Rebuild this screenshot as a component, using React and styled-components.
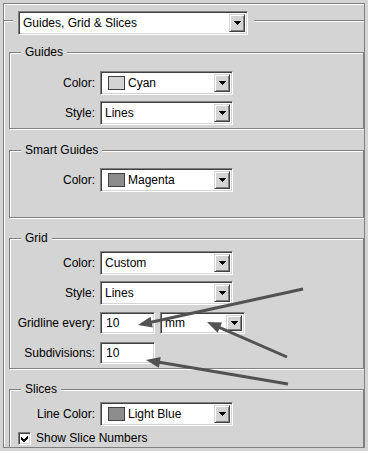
import React from 'react';
import styled, { createGlobalStyle } from 'styled-components';

const bg = '#d4d4d4';
const shade = '#808080';
const dark = '#404040';
const arrowInk = '#525252';

const GlobalStyle = createGlobalStyle`
  html, body {
    margin: 0;
    padding: 0;
    background: ${bg};
  }
  body {
    font-family: "Liberation Sans", Arial, sans-serif;
    font-size: 12px;
    color: #000;
  }
`;

const Page = styled.div`
  position: relative;
  width: 368px;
  height: 451px;
  box-sizing: border-box;
  padding: 3px 0 0 3px;
  overflow: hidden;
`;

const Panel = styled.div`
  width: 362px;
  height: 445px;
  box-sizing: border-box;
  border: 1px solid ${shade};
  box-shadow: inset 1px 1px 0 #fff;
  overflow: hidden;
  display: flex;
  flex-direction: column;
`;

const HeaderRow = styled.div`
  display: flex;
  align-items: flex-start;
  margin-top: 7px;
`;

const Rule = styled.div`
  height: 0;
  margin-top: 9px;
  border-top: 1px solid ${shade};
  border-bottom: 1px solid #fff;
  ${p => (p.$w ? `width: ${p.$w}px;` : 'flex: 1;')}
`;

const Groups = styled.div`
  display: flex;
  flex-direction: column;
  padding-left: 5px;
`;

const Group = styled.fieldset`
  margin: ${p => p.$mt}px 0 0 0;
  padding: 0 0 ${p => p.$pb}px 0;
  min-inline-size: 0;
  border: 1px solid ${shade};
  box-shadow: inset 1px 1px 0 #fff, 1px 1px 0 #fff;
  flex-shrink: 0;
`;

const Legend = styled.legend`
  margin-left: 11px;
  padding: 0 4px;
  line-height: 14px;
  background: ${bg};
`;

const Rows = styled.div`
  display: flex;
  flex-direction: column;
  gap: 6px;
  padding-top: ${p => p.$pt}px;
`;

const Row = styled.div`
  display: flex;
  align-items: center;
  gap: 5px;
  height: 24px;
`;

const Label = styled.span`
  width: 85px;
  text-align: right;
  white-space: nowrap;
`;

const SelectBox = styled.div`
  width: ${p => p.$w}px;
  height: ${p => p.$h || 24}px;
  box-sizing: border-box;
  display: flex;
  align-items: center;
  background: #fff;
  border: 1px solid;
  border-color: ${shade} #fff #fff ${shade};
  box-shadow: inset 1px 1px 0 ${dark}, inset -1px -1px 0 ${bg};
  padding: 2px 2px 2px 4px;
  flex-shrink: 0;
`;

const SelectText = styled.span`
  flex: 1;
  white-space: nowrap;
  overflow: hidden;
`;

const DropButton = styled.div`
  width: 16px;
  align-self: stretch;
  box-sizing: border-box;
  background: ${bg};
  border: 1px solid;
  border-color: ${bg} ${dark} ${dark} ${bg};
  box-shadow: inset 1px 1px 0 #fff, inset -1px -1px 0 ${shade};
  display: flex;
  align-items: center;
  justify-content: center;
`;

const Swatch = styled.span`
  width: 17px;
  height: 14px;
  box-sizing: border-box;
  margin: 0 3px 0 3px;
  border: 1px solid ${dark};
  background: ${p => p.$fill};
`;

const TextBox = styled(SelectBox)`
  width: 55px;
  height: 22px;
  padding-left: 5px;
`;

const CheckRow = styled.label`
  display: flex;
  align-items: center;
  gap: 5px;
  margin: 5px 0 0 8px;
`;

const CheckBox = styled.span`
  width: 13px;
  height: 13px;
  box-sizing: border-box;
  background: #fff;
  border: 1px solid;
  border-color: ${shade} #fff #fff ${shade};
  box-shadow: inset 1px 1px 0 ${dark}, inset -1px -1px 0 ${bg};
  display: flex;
  align-items: center;
  justify-content: center;
`;

const Overlay = styled.svg`
  position: absolute;
  left: 0;
  top: 0;
  pointer-events: none;
`;

function Select({ w, value, swatch, h }) {
  return (
    <SelectBox $w={w} $h={h}>
      {swatch && <Swatch $fill={swatch} />}
      <SelectText>{value}</SelectText>
      <DropButton>
        <svg width="7" height="4" viewBox="0 0 7 4" shapeRendering="crispEdges">
          <polygon points="0,0 7,0 3.5,4" fill="#000" />
        </svg>
      </DropButton>
    </SelectBox>
  );
}

function Field({ label, children }) {
  return (
    <Row>
      <Label>{label}</Label>
      {children}
    </Row>
  );
}

const arrows = [
  { from: [303, 289], to: [138, 325] },
  { from: [287, 357], to: [207, 322] },
  { from: [288, 384], to: [146, 360] },
];

function Arrow({ from, to }) {
  const dx = to[0] - from[0];
  const dy = to[1] - from[1];
  const len = Math.hypot(dx, dy);
  const ux = dx / len;
  const uy = dy / len;
  const headLen = 14;
  const headHalf = 5.5;
  const bx = to[0] - ux * headLen;
  const by = to[1] - uy * headLen;
  const nx = -uy;
  const ny = ux;
  const pts = [
    `${to[0]},${to[1]}`,
    `${bx + nx * headHalf},${by + ny * headHalf}`,
    `${bx - nx * headHalf},${by - ny * headHalf}`,
  ].join(' ');
  return (
    <g>
      <line x1={from[0]} y1={from[1]} x2={bx + ux * 2} y2={by + uy * 2} stroke={arrowInk} strokeWidth="3" />
      <polygon points={pts} fill={arrowInk} />
    </g>
  );
}

export default function App() {
  return (
    <Page>
      <GlobalStyle />
      <Panel>
        <HeaderRow>
          <Rule $w={9} />
          <div style={{ margin: '0 6px 0 5px' }}>
            <Select w={230} value="Guides, Grid & Slices" />
          </div>
          <Rule />
        </HeaderRow>

        <Groups>
          <Group $mt={10} $pb={3}>
            <Legend>Guides</Legend>
            <Rows $pt={12}>
              <Field label="Color:">
                <Select w={133} value="Cyan" swatch={bg} />
              </Field>
              <Field label="Style:">
                <Select w={133} value="Lines" />
              </Field>
            </Rows>
          </Group>

          <Group $mt={14} $pb={25}>
            <Legend>Smart Guides</Legend>
            <Rows $pt={11}>
              <Field label="Color:">
                <Select w={133} value="Magenta" swatch="#8c8c8c" />
              </Field>
            </Rows>
          </Group>

          <Group $mt={13} $pb={3}>
            <Legend>Grid</Legend>
            <Rows $pt={6}>
              <Field label="Color:">
                <Select w={133} value="Custom" />
              </Field>
              <Field label="Style:">
                <Select w={133} value="Lines" />
              </Field>
              <Field label="Gridline every:">
                <TextBox $w={55} $h={22}>10</TextBox>
                <Select w={85} h={22} value="mm" />
              </Field>
              <Field label="Subdivisions:">
                <TextBox $w={55} $h={22}>10</TextBox>
              </Field>
            </Rows>
          </Group>

          <Group $mt={13} $pb={20}>
            <Legend>Slices</Legend>
            <Rows $pt={6}>
              <Field label="Line Color:">
                <Select w={133} value="Light Blue" swatch="#8c8c8c" />
              </Field>
            </Rows>
            <CheckRow>
              <CheckBox>
                <svg width="7" height="7" viewBox="0 0 7 7" shapeRendering="crispEdges">
                  <path d="M0 2v3l2 2h1l4-4V0L2.5 4.5z" fill="#000" />
                </svg>
              </CheckBox>
              Show Slice Numbers
            </CheckRow>
          </Group>
        </Groups>
      </Panel>

      <Overlay width="368" height="451" viewBox="0 0 368 451">
        {arrows.map((a, i) => (
          <Arrow key={i} from={a.from} to={a.to} />
        ))}
      </Overlay>
    </Page>
  );
}
